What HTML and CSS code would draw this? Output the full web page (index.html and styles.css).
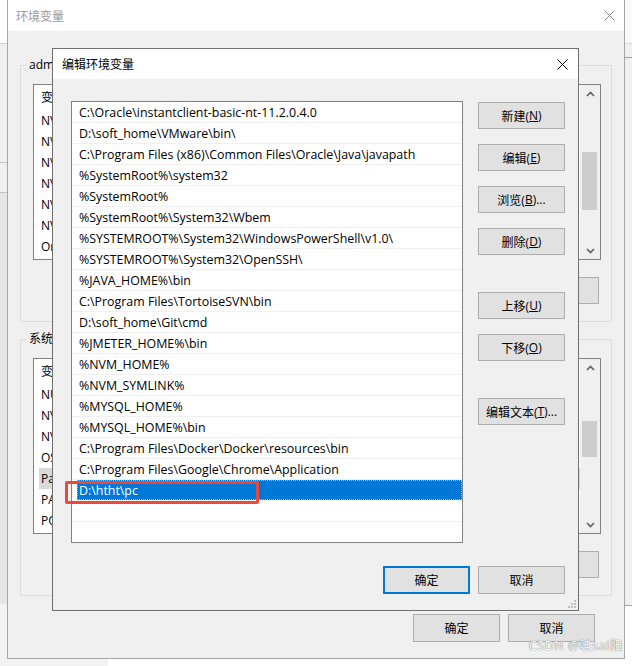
FILE: index.html
```html
<!DOCTYPE html>
<html lang="zh-CN">
<head>
<meta charset="utf-8">
<title>编辑环境变量</title>
<link rel="stylesheet" href="styles.css">
</head>
<body>
<div class="desk">
  <div class="backwin">
    <div class="bw-top"></div>
    <div class="bw-a"></div>
    <div class="bw-b"></div>
    <div class="bw-c"></div>
  </div>
  <div class="sidewin">
    <div class="sw-top"></div>
    <div class="sw-a"></div>
    <div class="sw-b"></div>
  </div>

  <div class="bgwin">
    <div class="titlebar bg-title">
      <span>环境变量</span>
      <svg class="xicon" width="11" height="11" viewBox="0 0 11 11"><path d="M0.5 0.5L10.5 10.5M10.5 0.5L0.5 10.5" stroke="#8a8a8a" stroke-width="1"/></svg>
    </div>
    <div class="bgbody">
      <fieldset class="group">
        <legend>admin 的用户变量(U)</legend>
        <div class="gin">
          <div class="vlist">
            <div class="vrows">
              <div class="vhead">变量</div>
              <div class="vrow">NVM_HOME</div>
              <div class="vrow">NVM_SYMLINK</div>
              <div class="vrow">NVM_NODE</div>
              <div class="vrow">NVM_BIN</div>
              <div class="vrow">NVM_DIR</div>
              <div class="vrow">NVM_PATH</div>
              <div class="vrow">OneDrive</div>
            </div>
            <div class="vscroll">
              <div class="sarrow"><svg width="9" height="6" viewBox="0 0 9 6"><path d="M1 5L4.5 1.5L8 5" fill="none" stroke="#606060" stroke-width="1.6"/></svg></div>
              <div class="strack"><div class="sthumb" style="margin-top:50px;height:58px"></div></div>
              <div class="sarrow"><svg width="9" height="6" viewBox="0 0 9 6"><path d="M1 1L4.5 4.5L8 1" fill="none" stroke="#606060" stroke-width="1.6"/></svg></div>
            </div>
          </div>
          <div class="vbtns">
            <div class="btn bgbtn">新建(<u>N</u>)...</div>
            <div class="btn bgbtn">编辑(<u>E</u>)...</div>
            <div class="btn bgbtn">删除(<u>D</u>)</div>
          </div>
        </div>
      </fieldset>

      <fieldset class="group group2">
        <legend>系统变量(S)</legend>
        <div class="gin">
          <div class="vlist">
            <div class="vrows">
              <div class="vhead">变量</div>
              <div class="vrow">NUMBER_OF_PROCESSORS</div>
              <div class="vrow">NVM_HOME</div>
              <div class="vrow">NVM_SYMLINK</div>
              <div class="vrow">OS</div>
              <div class="vrow vsel">Path</div>
              <div class="vrow">PATHEXT</div>
              <div class="vrow">POWERSHELL</div>
            </div>
            <div class="vscroll">
              <div class="sarrow"><svg width="9" height="6" viewBox="0 0 9 6"><path d="M1 5L4.5 1.5L8 5" fill="none" stroke="#606060" stroke-width="1.6"/></svg></div>
              <div class="strack"><div class="sthumb" style="margin-top:45px;height:36px"></div></div>
              <div class="sarrow"><svg width="9" height="6" viewBox="0 0 9 6"><path d="M1 1L4.5 4.5L8 1" fill="none" stroke="#606060" stroke-width="1.6"/></svg></div>
            </div>
          </div>
          <div class="vbtns">
            <div class="btn bgbtn">新建(<u>W</u>)...</div>
            <div class="btn bgbtn">编辑(<u>I</u>)...</div>
            <div class="btn bgbtn">删除(<u>L</u>)</div>
          </div>
        </div>
      </fieldset>

      <div class="bgfoot">
        <div class="btn footbtn">确定</div>
        <div class="btn footbtn">取消</div>
      </div>
    </div>
  </div>

  <div class="fgwin">
    <div class="titlebar fg-title">
      <span>编辑环境变量</span>
      <svg class="xicon" width="11" height="11" viewBox="0 0 11 11"><path d="M0.5 0.5L10.5 10.5M10.5 0.5L0.5 10.5" stroke="#000" stroke-width="1"/></svg>
    </div>
    <div class="fgbody">
      <div class="fgmain">
        <div class="plist">
          <div class="prow">C:\Oracle\instantclient-basic-nt-11.2.0.4.0</div>
          <div class="prow">D:\soft_home\VMware\bin\</div>
          <div class="prow">C:\Program Files (x86)\Common Files\Oracle\Java\javapath</div>
          <div class="prow">%SystemRoot%\system32</div>
          <div class="prow">%SystemRoot%</div>
          <div class="prow">%SystemRoot%\System32\Wbem</div>
          <div class="prow">%SYSTEMROOT%\System32\WindowsPowerShell\v1.0\</div>
          <div class="prow">%SYSTEMROOT%\System32\OpenSSH\</div>
          <div class="prow">%JAVA_HOME%\bin</div>
          <div class="prow">C:\Program Files\TortoiseSVN\bin</div>
          <div class="prow">D:\soft_home\Git\cmd</div>
          <div class="prow">%JMETER_HOME%\bin</div>
          <div class="prow">%NVM_HOME%</div>
          <div class="prow">%NVM_SYMLINK%</div>
          <div class="prow">%MYSQL_HOME%</div>
          <div class="prow">%MYSQL_HOME%\bin</div>
          <div class="prow">C:\Program Files\Docker\Docker\resources\bin</div>
          <div class="prow">C:\Program Files\Google\Chrome\Application</div>
          <div class="prow sel"><span class="selbox">D:\htht\pc</span></div>
          <div class="prow"></div>
          <div class="prow last"></div>
        </div>
        <div class="fgbtns">
          <div class="btn">新建(<u>N</u>)</div>
          <div class="btn">编辑(<u>E</u>)</div>
          <div class="btn">浏览(<u>B</u>)...</div>
          <div class="btn">删除(<u>D</u>)</div>
          <div class="btn sep">上移(<u>U</u>)</div>
          <div class="btn">下移(<u>O</u>)</div>
          <div class="btn sep">编辑文本(<u>T</u>)...</div>
        </div>
      </div>
      <div class="fgfoot">
        <div class="btn footbtn default">确定</div>
        <div class="btn footbtn">取消</div>
      </div>
    </div>
    <svg class="grip" width="10" height="10" viewBox="0 0 10 10">
      <rect x="7" y="1" width="2" height="2" fill="#bdbdbd"/>
      <rect x="4" y="4" width="2" height="2" fill="#bdbdbd"/>
      <rect x="7" y="4" width="2" height="2" fill="#bdbdbd"/>
      <rect x="1" y="7" width="2" height="2" fill="#bdbdbd"/>
      <rect x="4" y="7" width="2" height="2" fill="#bdbdbd"/>
      <rect x="7" y="7" width="2" height="2" fill="#bdbdbd"/>
    </svg>
  </div>

  <div class="mark"></div>
  <div class="watermark">CSDN @哇sai阳</div>
</div>
</body>
</html>
```
FILE: styles.css
```css
* { box-sizing: border-box; }
html, body { margin: 0; padding: 0; }
body {
  width: 632px;
  height: 666px;
  overflow: hidden;
  background: #fff;
  font-family: "Open Sans", "Noto Sans CJK SC", sans-serif;
  font-size: 12px;
  color: #000;
}
.desk { position: relative; width: 632px; height: 666px; background: #fff; overflow: hidden; }

/* windows behind */
.backwin {
  position: absolute; left: 0; top: 0; width: 108px; height: 666px;
  background: #f3f3f3; display: flex; flex-direction: column;
}
.bw-top { height: 44px; background: #fff; border-bottom: 1px solid #cfcfcf; }
.bw-a { height: 119px; background: #f0f0f0; border-bottom: 1px solid #c4c4c4; }
.bw-b { height: 30px; background: #f0f0f0; border-bottom: 1px solid #c4c4c4; }
.bw-c { height: 411px; background: #e6e6e6; }

.sidewin {
  position: absolute; left: 625px; top: 0; width: 7px; height: 666px;
  background: #fff; display: flex; flex-direction: column;
}
.sw-top { height: 44px; background: #fafafa; border-bottom: 1px solid #dcdcdc; }
.sw-a { height: 14px; background: #f0f0f0; border-bottom: 1px solid #a0a0a0; }
.sw-b { height: 548px; background: #f0f0f0; border-bottom: 1px solid #a0a0a0; }

/* title bars */
.titlebar {
  display: flex; align-items: center; justify-content: space-between;
  background: #fff; flex: none;
}
.xicon { display: block; }

/* background window */
.bgwin {
  position: absolute; left: 7px; top: 0; width: 618px; height: 659px;
  border: 1px solid #a6a6a6; border-top: 0;
  background: #f0f0f0; display: flex; flex-direction: column;
}
.bg-title { height: 31px; padding: 0 9px 0 8px; color: #999; }
.bgbody { flex: 1; padding: 0 12px; display: flex; flex-direction: column; }

.group {
  margin: 26px 0 0; padding: 0; min-width: 0;
  border: 1px solid #dcdcdc;
}
.group2 { margin-top: 9px; }
.group legend {
  margin-left: 6px; padding: 0 2px; line-height: 16px; font-size: 12px;
  white-space: nowrap;
}
.gin { padding: 11px 10px 17px 12px; }

.vlist {
  height: 176px; border: 1px solid #828282; background: #fff;
  display: flex; overflow: hidden;
}
.vrows { flex: 1; min-width: 0; overflow: hidden; }
.vhead { height: 25px; line-height: 25px; padding-left: 7px; white-space: nowrap; }
.vrow { height: 21px; line-height: 21px; padding-left: 7px; white-space: nowrap; }
.vsel { background: #d9d9d9; margin-left: 5px; padding-left: 2px; }

.vscroll { width: 20px; flex: none; background: #f0f0f0; display: flex; flex-direction: column; }
.sarrow { height: 17px; display: flex; align-items: center; justify-content: center; flex: none; }
.strack { flex: 1; }
.sthumb { background: #cdcdcd; margin-left: 2px; margin-right: 3px; }

.vbtns { margin-top: 17px; display: flex; justify-content: flex-end; gap: 9px; padding-right: 2px; }

.btn {
  height: 27px; background: #e1e1e1; border: 1px solid #adadad;
  display: flex; align-items: center; justify-content: center;
  white-space: nowrap; font-size: 12px;
}
.btn u { text-decoration: underline; text-underline-offset: 1px; }
.bgbtn { width: 87px; }

.bgfoot { margin-top: 18px; display: flex; justify-content: flex-end; gap: 8px; padding-right: 17px; }
.footbtn { width: 87px; height: 28px; }

/* foreground window */
.fgwin {
  position: absolute; left: 52px; top: 48px; width: 527px; height: 563px;
  border: 1px solid #6f6f6f; background: #f0f0f0;
  display: flex; flex-direction: column;
}
.fg-title { height: 30px; padding: 0 10px 0 9px; }
.fgbody { flex: 1; padding: 22px 13px 16px 18px; display: flex; flex-direction: column; }
.fgmain { display: flex; gap: 15px; align-items: flex-start; }

.plist {
  width: 392px; height: 442px; flex: none;
  border: 1px solid #828282; background: #fff; overflow: hidden;
}
.prow {
  height: 21px; border-bottom: 1px solid #f0f0f0;
  padding: 1px 0 0 7px; line-height: 19px; white-space: nowrap; display: flex;
  font-size: 12.4px;
}
.prow.last { border-bottom: 0; }
.prow.sel { padding: 0 0 0 5px; }
.selbox {
  flex: 1; background: #0078d7; color: #fff; padding: 1px 0 0 2px; line-height: 19px;
  outline: 1px dotted #f2a65a; outline-offset: -1px;
}

.fgbtns { width: 87px; flex: none; display: flex; flex-direction: column; gap: 15px; margin-top: 1px; }
.fgbtns .sep { margin-top: 22px; }

.fgfoot { margin-top: 23px; display: flex; justify-content: flex-end; gap: 8px; }
.default { border: 2px solid #0078d7; }

.grip { position: absolute; right: 1px; bottom: 1px; }

/* annotation overlay */
.mark {
  position: absolute; left: 65px; top: 481px; width: 194px; height: 23px;
  border: 3px solid #ea4a3c; border-radius: 2px;
}

.watermark {
  position: absolute; right: 9px; top: 638px;
  font-size: 12px; line-height: 16px; letter-spacing: 0.8px; color: #fff;
  text-shadow: 0 0 1px #777, 0 0 1px #777;
  white-space: nowrap;
}
```
